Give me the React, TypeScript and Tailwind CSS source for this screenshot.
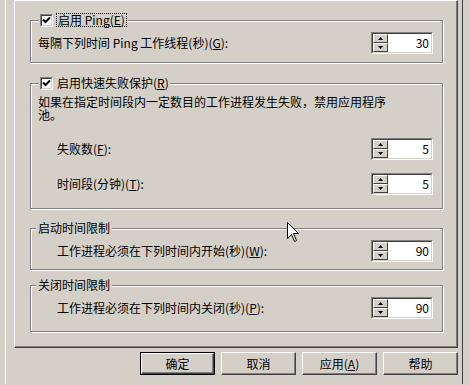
import React from 'react';

const font = { fontFamily: '"Noto Sans CJK SC", "Liberation Sans", sans-serif' };

const CheckBox: React.FC = () => (
  <div className="h-[13px] w-[13px] border border-t-[#808080] border-l-[#808080] border-b-white border-r-white">
    <div className="flex h-full w-full items-center justify-center border border-t-[#404040] border-l-[#404040] border-b-[#d4d0c8] border-r-[#d4d0c8] bg-white">
      <svg width="9" height="9" viewBox="0 0 9 9">
        <polyline points="1,3.5 3.5,6 8,1.5" fill="none" stroke="#000" strokeWidth="2" />
      </svg>
    </div>
  </div>
);

const SpinBtn: React.FC<{ up?: boolean }> = ({ up }) => (
  <div className="flex h-[9px] items-center justify-center border border-t-white border-l-white border-b-[#404040] border-r-[#404040] bg-[#d4d0c8]">
    <svg width="5" height="3" viewBox="0 0 5 3">
      {up ? <polygon points="2.5,0 5,3 0,3" fill="#000" /> : <polygon points="0,0 5,0 2.5,3" fill="#000" />}
    </svg>
  </div>
);

const Spinner: React.FC<{ value: string }> = ({ value }) => (
  <div className="flex h-[22px] w-[62px] shrink-0 border border-t-[#808080] border-l-[#808080] border-b-white border-r-white">
    <div className="flex flex-1 border border-t-[#404040] border-l-[#404040] border-b-[#d4d0c8] border-r-[#d4d0c8] bg-white">
      <div className="flex w-[15px] flex-col">
        <SpinBtn up />
        <SpinBtn />
      </div>
      <div className="flex-1 pr-[2px] text-right text-[12px] leading-[18px] text-black">{value}</div>
    </div>
  </div>
);

const Group: React.FC<{ legend: React.ReactNode; labelClass: string; className: string; children: React.ReactNode }> = ({
  legend,
  labelClass,
  className,
  children,
}) => (
  <div className={`relative border border-[#808080] shadow-[inset_1px_1px_0_#fff,1px_1px_0_#fff] ${className}`}>
    <div className={`absolute -top-[8px] flex h-[14px] items-center bg-[#d4d0c8] ${labelClass}`}>{legend}</div>
    {children}
  </div>
);

const Row: React.FC<{ label: React.ReactNode; value: string; indent?: boolean }> = ({ label, value, indent }) => (
  <div className={`flex items-center justify-between pr-[9px] ${indent ? 'pl-[26px]' : 'pl-[7px]'}`}>
    <span className="whitespace-nowrap">{label}</span>
    <Spinner value={value} />
  </div>
);

const Btn: React.FC<{ children: React.ReactNode; primary?: boolean }> = ({ children, primary }) => {
  const face = (
    <div className="flex h-full w-full items-center justify-center border border-t-white border-l-white border-b-[#404040] border-r-[#404040] shadow-[inset_-1px_-1px_0_#808080]">
      {children}
    </div>
  );
  return primary ? (
    <div className="h-[23px] w-[75px] border border-black">{face}</div>
  ) : (
    <div className="h-[23px] w-[75px]">{face}</div>
  );
};

export default function App() {
  return (
    <div className="relative h-[385px] w-[470px] overflow-hidden bg-[#d4d0c8] pl-[5px] pr-[7px] text-[12px] text-black" style={font}>
      <div className="h-[384px] border-l border-l-white border-r border-r-[#404040] pl-[8px] pr-[4px]">
        <div className="h-[348px] border border-t-white border-l-white border-r-[#404040] border-b-[#404040] pl-[15px] pr-[14px] pt-[19px] shadow-[inset_-1px_-1px_0_#808080]">
          <Group
            className="pt-[11px] pb-[8px]"
            labelClass="left-[8px] px-[1px]"
            legend={
              <>
                <CheckBox />
                <span className="ml-[3px] border border-dotted border-black px-[1px] leading-[12px]">
                  启用 Ping(<u>E</u>)
                </span>
              </>
            }
          >
            <Row label={<>每隔下列时间 Ping 工作线程(秒)(<u>G</u>):</>} value="30" />
          </Group>

          <Group
            className="mt-[20px] pt-[11px] pb-[13px]"
            labelClass="left-[8px] px-[1px]"
            legend={
              <>
                <CheckBox />
                <span className="ml-[4px]">
                  启用快速失败保护(<u>R</u>)
                </span>
              </>
            }
          >
            <p className="w-[362px] pl-[7px] leading-[13px]">如果在指定时间段内一定数目的工作进程发生失败，禁用应用程序池。</p>
            <div className="mt-[17px]">
              <Row indent label={<>失败数(<u>F</u>):</>} value="5" />
            </div>
            <div className="mt-[13px]">
              <Row indent label={<>时间段(分钟)(<u>T</u>):</>} value="5" />
            </div>
          </Group>

          <Group className="mt-[19px] pt-[11px] pb-[7px]" labelClass="left-[5px] px-[2px]" legend={<span>启动时间限制</span>}>
            <Row indent label={<>工作进程必须在下列时间内开始(秒)(<u>W</u>):</>} value="90" />
          </Group>

          <Group className="mt-[15px] pt-[11px] pb-[12px]" labelClass="left-[5px] px-[2px]" legend={<span>关闭时间限制</span>}>
            <Row indent label={<>工作进程必须在下列时间内关闭(秒)(<u>P</u>):</>} value="90" />
          </Group>
        </div>

        <div className="mt-[4px] flex justify-end gap-[6px]">
          <Btn primary>确定</Btn>
          <Btn>取消</Btn>
          <Btn>
            应用(<u>A</u>)
          </Btn>
          <Btn>帮助</Btn>
        </div>
      </div>

      <svg className="absolute left-[287px] top-[222px]" width="13" height="21" viewBox="0 0 13 21">
        <path d="M0.5 0.5 L0.5 16.5 L4.5 12.5 L7.5 19.5 L9.5 18.5 L6.5 11.5 L11.5 11.5 Z" fill="#fff" stroke="#000" strokeWidth="1" />
      </svg>
    </div>
  );
}
